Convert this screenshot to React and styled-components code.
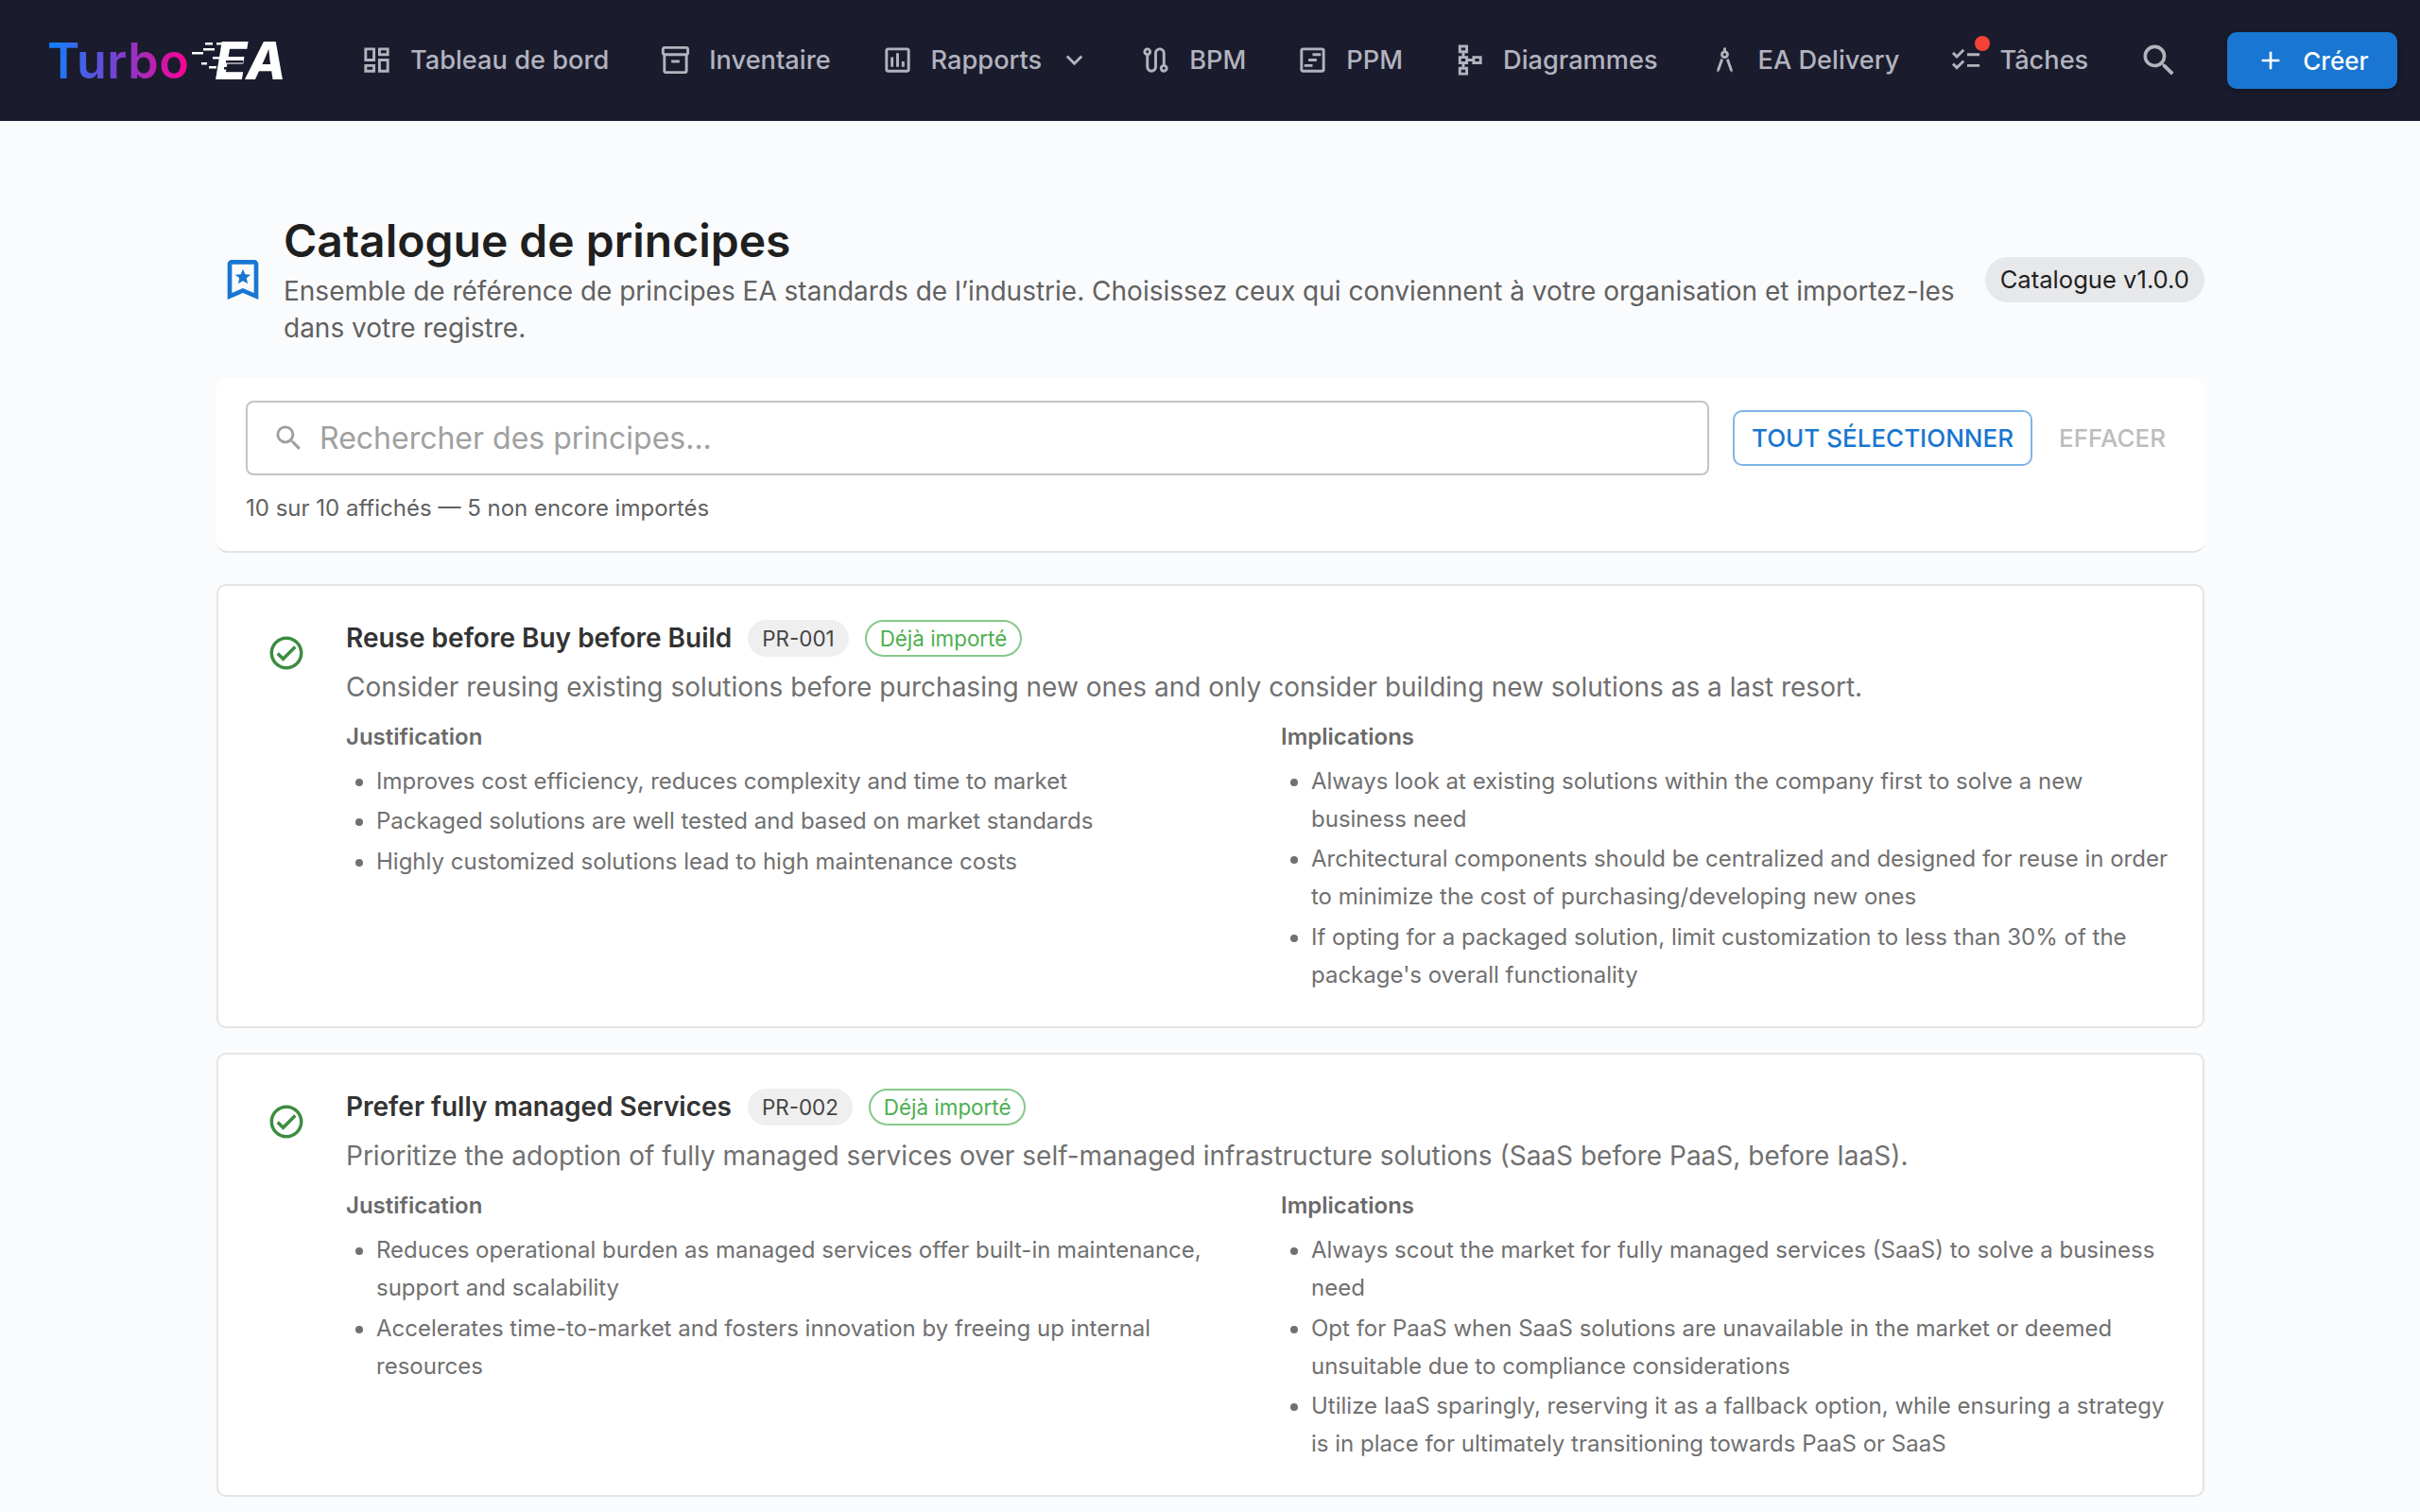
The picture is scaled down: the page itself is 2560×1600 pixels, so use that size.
import React from "react";
import styled, { createGlobalStyle } from "styled-components";
import {
  MdOutlineDashboard,
  MdOutlineInventory2,
  MdOutlineAssessment,
  MdOutlineRoute,
  MdOutlineViewTimeline,
  MdOutlineSchema,
  MdOutlineArchitecture,
  MdOutlineChecklist,
  MdSearch,
  MdAdd,
  MdKeyboardArrowDown,
  MdOutlineCheckCircle,
} from "react-icons/md";

const GlobalStyle = createGlobalStyle`
  html, body {
    margin: 0;
    padding: 0;
    height: 100%;
    overflow: hidden;
    background: #fafbfd;
    font-family: Inter, "Liberation Sans", sans-serif;
  }
  * { box-sizing: border-box; }
`;

const Header = styled.header`
  height: 128px;
  background: #1a1c2e;
  display: flex;
  align-items: center;
  padding-left: 50px;
  white-space: nowrap;
`;

const Logo = styled.div`
  display: flex;
  align-items: center;
  width: 331px;
  flex: none;
`;

const LogoTurbo = styled.span`
  font-size: 52px;
  font-weight: 600;
  letter-spacing: 0.5px;
  background: linear-gradient(90deg, #0a84ff 0%, #7b3fd0 50%, #ff0090 100%);
  -webkit-background-clip: text;
  background-clip: text;
  color: transparent;
`;

const SpeedLinesSvg = styled.svg`
  flex: none;
  margin-left: 3px;
  position: relative;
  z-index: 1;
`;

const LogoEa = styled.span`
  font-size: 55px;
  font-weight: 800;
  font-style: italic;
  color: #fff;
  margin-left: -38px;
  letter-spacing: -1px;
`;

const Nav = styled.nav`
  display: flex;
  align-items: center;
  gap: 53px;
  flex: none;
  margin-bottom: 2px;
`;

const NavItem = styled.a`
  display: flex;
  align-items: center;
  gap: 18px;
  color: #b3b3bd;
  font-size: 27.2px;
  font-weight: 500;
  position: relative;
  svg { font-size: 35px; flex: none; }
`;

const Chevron = styled(MdKeyboardArrowDown)`
  margin-left: -1px;
  margin-right: -2px;
`;

const Dot = styled.span`
  position: absolute;
  left: 27px;
  top: -8px;
  width: 16px;
  height: 16px;
  border-radius: 50%;
  background: #f44336;
`;

const SearchButton = styled.div`
  display: flex;
  margin-left: 53px;
  color: #b3b3bd;
  font-size: 44px;
`;

const CreateButton = styled.button`
  display: flex;
  align-items: center;
  gap: 18px;
  height: 60px;
  width: 180px;
  margin-left: 50px;
  padding: 0 0 0 30px;
  border: none;
  border-radius: 10px;
  background: #1976d2;
  color: #fff;
  font-family: inherit;
  font-size: 26px;
  font-weight: 500;
  box-shadow: 0 2px 6px rgba(0, 0, 0, 0.3);
  svg { font-size: 32px; }
`;

const Main = styled.main`
  padding: 93px 228px 0 229px;
`;

const TitleRow = styled.div`
  display: flex;
  align-items: center;
  margin-bottom: 33px;
`;

const TitleIcon = styled.svg`
  width: 56px;
  height: 56px;
  flex: none;
  color: #1976d2;
  margin: 4px 15px 0 0;
`;

const TitleText = styled.div`
  flex: 1;
  min-width: 0;
`;

const Title = styled.h1`
  margin: 0;
  font-size: 48px;
  line-height: 68px;
  font-weight: 600;
  color: #1f1f1f;
`;

const Subtitle = styled.p`
  margin: 0;
  font-size: 28px;
  line-height: 39px;
  color: #616161;
`;

const VersionChip = styled.span`
  flex: none;
  margin: 4px 0 0 28px;
  height: 48px;
  line-height: 48px;
  padding: 0 16px;
  border-radius: 24px;
  background: #e7e8ea;
  color: #1f1f1f;
  font-size: 25.6px;
`;

const Toolbar = styled.section`
  background: #fff;
  border-radius: 12px;
  border-bottom: 2px solid #e2e3e5;
  padding: 24px 34px 0 31px;
  height: 185px;
  margin-bottom: 33px;
`;

const ToolbarRow = styled.div`
  display: flex;
  align-items: center;
`;

const SearchField = styled.label`
  flex: 1;
  height: 79px;
  display: flex;
  align-items: center;
  gap: 13px;
  padding-left: 26px;
  border: 2px solid #c4c4c4;
  border-radius: 8px;
  color: #9e9e9e;
  svg { font-size: 35px; flex: none; }
`;

const SearchInput = styled.input`
  flex: 1;
  border: none;
  outline: none;
  background: none;
  font-family: inherit;
  font-size: 32px;
  color: #333;
  &::placeholder { color: #a0a0a0; opacity: 1; }
`;

const SelectAll = styled.button`
  flex: none;
  height: 59px;
  margin-left: 25px;
  padding: 0 18px;
  border: 2px solid #80b4e8;
  border-radius: 10px;
  background: #fff;
  color: #1976d2;
  font-family: inherit;
  font-size: 26px;
  font-weight: 500;
`;

const ClearButton = styled.button`
  flex: none;
  width: 148px;
  padding: 0 0 0 28px;
  text-align: left;
  border: none;
  background: none;
  color: #bdbdbd;
  font-family: inherit;
  font-size: 26px;
  font-weight: 500;
`;

const CountText = styled.div`
  margin-top: 17px;
  font-size: 24px;
  line-height: 36px;
  color: #616161;
`;

const Card = styled.article`
  display: flex;
  background: #fff;
  border: 2px solid #e3e4e6;
  border-radius: 10px;
  padding: 35px 34px 32px 52px;
  margin-bottom: 26px;
`;

const CheckIcon = styled(MdOutlineCheckCircle)`
  flex: none;
  font-size: 42px;
  color: #3c8c40;
  margin: 15px 42px 0 -1px;
`;

const CardBody = styled.div`
  flex: 1;
  min-width: 0;
`;

const CardHead = styled.div`
  display: flex;
  align-items: center;
  gap: 17px;
`;

const CardTitle = styled.h2`
  margin: 0;
  font-size: 28px;
  line-height: 40px;
  font-weight: 600;
  color: #333;
`;

const IdChip = styled.span`
  height: 39px;
  line-height: 39px;
  padding: 0 15px;
  border-radius: 20px;
  background: #efefef;
  color: #444;
  font-size: 22.4px;
`;

const ImportedChip = styled.span`
  height: 39px;
  line-height: 35px;
  padding: 0 14px;
  border-radius: 20px;
  border: 2px solid #86c98a;
  color: #4caf50;
  font-size: 22.4px;
`;

const Description = styled.p`
  margin: 12px 0 0;
  font-size: 28px;
  line-height: 40px;
  color: #707070;
`;

const Columns = styled.div`
  display: grid;
  grid-template-columns: 1fr 1fr;
  column-gap: 48px;
  margin-top: 15px;
`;

const ColumnLabel = styled.div`
  font-size: 24px;
  line-height: 36px;
  font-weight: 600;
  color: #6a6a6a;
  margin-bottom: 9px;
`;

const Points = styled.ul`
  margin: 0;
  padding-left: 32px;
`;

const Point = styled.li`
  font-size: 24px;
  line-height: 40px;
  color: #707070;
  margin-bottom: 2.4px;
`;

const navItems = [
  { label: "Tableau de bord", Icon: MdOutlineDashboard },
  { label: "Inventaire", Icon: MdOutlineInventory2 },
  { label: "Rapports", Icon: MdOutlineAssessment, menu: true },
  { label: "BPM", Icon: MdOutlineRoute },
  { label: "PPM", Icon: MdOutlineViewTimeline },
  { label: "Diagrammes", Icon: MdOutlineSchema },
  { label: "EA Delivery", Icon: MdOutlineArchitecture },
  { label: "Tâches", Icon: MdOutlineChecklist, dot: true },
];

const principles = [
  {
    id: "PR-001",
    title: "Reuse before Buy before Build",
    description:
      "Consider reusing existing solutions before purchasing new ones and only consider building new solutions as a last resort.",
    justification: [
      "Improves cost efficiency, reduces complexity and time to market",
      "Packaged solutions are well tested and based on market standards",
      "Highly customized solutions lead to high maintenance costs",
    ],
    implications: [
      "Always look at existing solutions within the company first to solve a new business need",
      "Architectural components should be centralized and designed for reuse in order to minimize the cost of purchasing/developing new ones",
      "If opting for a packaged solution, limit customization to less than 30% of the package's overall functionality",
    ],
  },
  {
    id: "PR-002",
    title: "Prefer fully managed Services",
    description:
      "Prioritize the adoption of fully managed services over self-managed infrastructure solutions (SaaS before PaaS, before IaaS).",
    justification: [
      "Reduces operational burden as managed services offer built-in maintenance, support and scalability",
      "Accelerates time-to-market and fosters innovation by freeing up internal resources",
    ],
    implications: [
      "Always scout the market for fully managed services (SaaS) to solve a business need",
      "Opt for PaaS when SaaS solutions are unavailable in the market or deemed unsuitable due to compliance considerations",
      "Utilize IaaS sparingly, reserving it as a fallback option, while ensuring a strategy is in place for ultimately transitioning towards PaaS or SaaS",
    ],
  },
];

const SpeedLines = () => (
  <SpeedLinesSvg width="62" height="40" viewBox="0 0 62 40">
    <g fill="#fff">
      <rect x="14" y="1" width="8" height="2.5" />
      <rect x="26" y="1" width="14" height="2.5" />
      <rect x="0" y="11" width="12" height="2.5" />
      <rect x="12" y="7" width="12" height="2.5" />
      <rect x="22" y="16" width="14" height="2.5" />
      <rect x="10" y="22" width="6" height="2.5" />
      <rect x="18" y="26" width="8" height="2.5" />
    </g>
    <g fill="#1a1c2e">
      <rect x="40" y="13" width="22" height="2.5" />
      <rect x="36" y="20" width="18" height="2.5" />
      <rect x="34" y="27" width="14" height="2.5" />
    </g>
  </SpeedLinesSvg>
);

const App = () => {
  return (
    <>
      <GlobalStyle />
      <Header>
        <Logo>
          <LogoTurbo>Turbo</LogoTurbo>
          <SpeedLines />
          <LogoEa>EA</LogoEa>
        </Logo>
        <Nav>
          {navItems.map(({ label, Icon, menu, dot }) => (
            <NavItem key={label}>
              <Icon />
              {dot && <Dot />}
              {label}
              {menu && <Chevron />}
            </NavItem>
          ))}
        </Nav>
        <SearchButton>
          <MdSearch />
        </SearchButton>
        <CreateButton>
          <MdAdd />
          Créer
        </CreateButton>
      </Header>
      <Main>
        <TitleRow>
          <TitleIcon viewBox="0 0 24 24" fill="currentColor">
            <path d="M17 3H7c-1.1 0-2 .9-2 2v16l7-3 7 3V5c0-1.1-.9-2-2-2zm0 15l-5-2.18L7 18V5h10v13z" />
            <path d="M12 7.2l1 2.3 2.5.2-1.9 1.6.6 2.5-2.2-1.3-2.2 1.3.6-2.5-1.9-1.6 2.5-.2z" />
          </TitleIcon>
          <TitleText>
            <Title>Catalogue de principes</Title>
            <Subtitle>
              Ensemble de référence de principes EA standards de l’industrie. Choisissez ceux qui
              conviennent à votre organisation et importez-les dans votre registre.
            </Subtitle>
          </TitleText>
          <VersionChip>Catalogue v1.0.0</VersionChip>
        </TitleRow>
        <Toolbar>
          <ToolbarRow>
            <SearchField>
              <MdSearch />
              <SearchInput placeholder="Rechercher des principes..." />
            </SearchField>
            <SelectAll>TOUT SÉLECTIONNER</SelectAll>
            <ClearButton>EFFACER</ClearButton>
          </ToolbarRow>
          <CountText>10 sur 10 affichés — 5 non encore importés</CountText>
        </Toolbar>
        {principles.map((p) => (
          <Card key={p.id}>
            <CheckIcon />
            <CardBody>
              <CardHead>
                <CardTitle>{p.title}</CardTitle>
                <IdChip>{p.id}</IdChip>
                <ImportedChip>Déjà importé</ImportedChip>
              </CardHead>
              <Description>{p.description}</Description>
              <Columns>
                <div>
                  <ColumnLabel>Justification</ColumnLabel>
                  <Points>
                    {p.justification.map((t) => (
                      <Point key={t}>{t}</Point>
                    ))}
                  </Points>
                </div>
                <div>
                  <ColumnLabel>Implications</ColumnLabel>
                  <Points>
                    {p.implications.map((t) => (
                      <Point key={t}>{t}</Point>
                    ))}
                  </Points>
                </div>
              </Columns>
            </CardBody>
          </Card>
        ))}
      </Main>
    </>
  );
};

export default App;
